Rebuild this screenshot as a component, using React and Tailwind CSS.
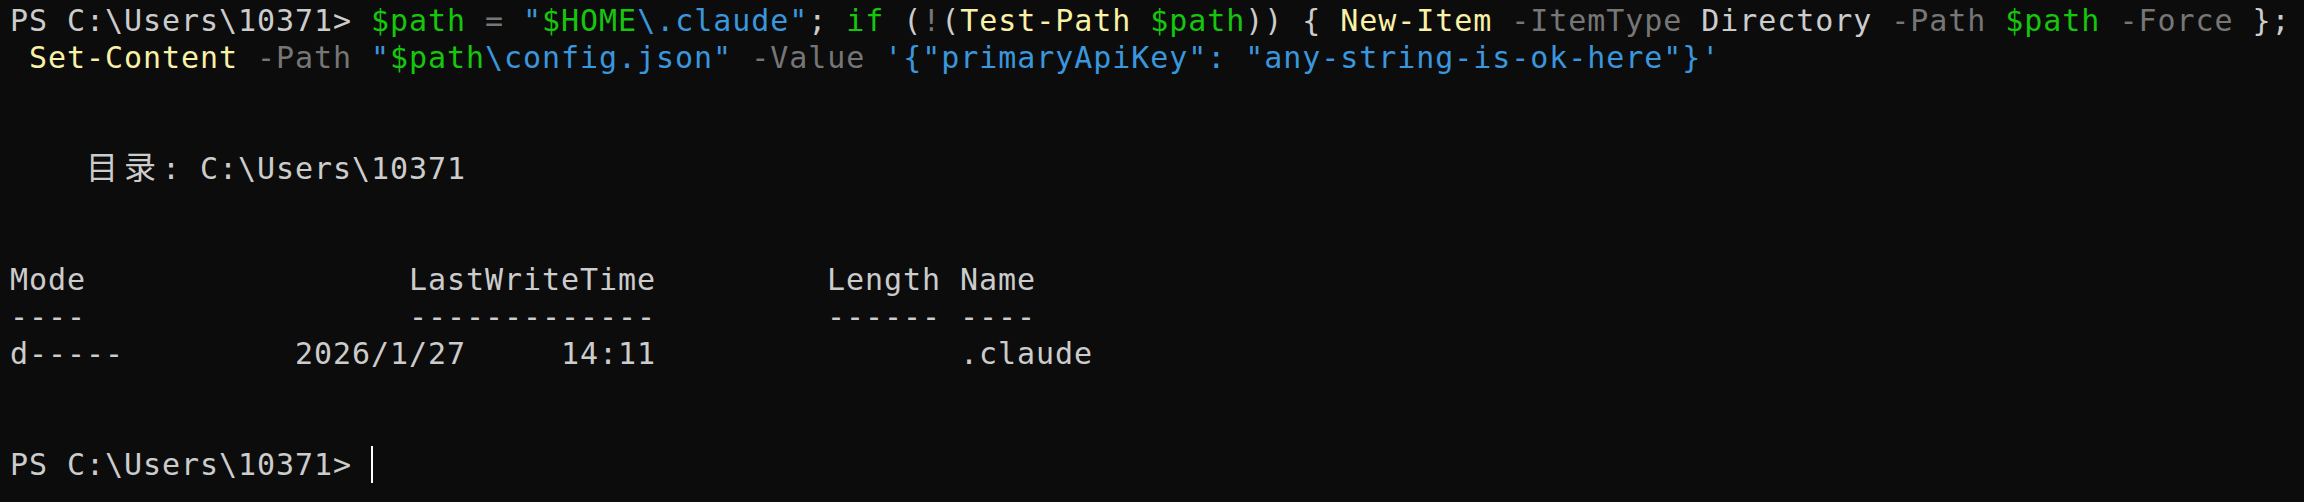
const C = {
  def: "text-[#cccccc]",
  green: "text-[#16c60c]",
  blue: "text-[#3a96dd]",
  yellow: "text-[#f9f1a5]",
  gray: "text-[#767676]",
};

function Line({ children }) {
  return <div className="h-[37px] whitespace-pre">{children}</div>;
}

function Wide({ ch }) {
  return (
    <span className="inline-block w-[38px] text-left text-[32px] leading-[37px] tracking-normal align-top">
      {ch}
    </span>
  );
}

export default function App() {
  const prompt = "PS C:\\Users\\10371> ";
  return (
    <div
      className="h-[502px] w-full overflow-hidden bg-[#0c0c0c] pl-[10px] pt-[2px] text-[30px] leading-[37px] tracking-[0.94px] text-[#cccccc]"
      style={{ fontFamily: '"DejaVu Sans Mono", "Noto Sans CJK SC", monospace' }}
    >
      <Line>
        <span className={C.def}>{prompt}</span>
        <span className={C.green}>$path</span>
        <span> </span>
        <span className={C.gray}>=</span>
        <span> </span>
        <span className={C.blue}>"</span>
        <span className={C.green}>$HOME</span>
        <span className={C.blue}>\.claude"</span>
        <span className={C.def}>; </span>
        <span className={C.green}>if</span>
        <span className={C.def}> (</span>
        <span className={C.gray}>!</span>
        <span className={C.def}>(</span>
        <span className={C.yellow}>Test-Path</span>
        <span> </span>
        <span className={C.green}>$path</span>
        <span className={C.def}>{")) { "}</span>
        <span className={C.yellow}>New-Item</span>
        <span className={C.gray}> -ItemType</span>
        <span className={C.def}> Directory</span>
        <span className={C.gray}> -Path</span>
        <span> </span>
        <span className={C.green}>$path</span>
        <span className={C.gray}> -Force</span>
        <span className={C.def}>{" };"}</span>
      </Line>
      <Line>
        <span> </span>
        <span className={C.yellow}>Set-Content</span>
        <span className={C.gray}> -Path</span>
        <span className={C.blue}> "</span>
        <span className={C.green}>$path</span>
        <span className={C.blue}>\config.json"</span>
        <span className={C.gray}> -Value</span>
        <span className={C.blue}>{` '{"primaryApiKey": "any-string-is-ok-here"}'`}</span>
      </Line>
      <Line> </Line>
      <Line> </Line>
      <Line>
        {"    "}
        <Wide ch="目" />
        <Wide ch="录" />
        {": C:\\Users\\10371"}
      </Line>
      <Line> </Line>
      <Line> </Line>
      <Line>{"Mode                 LastWriteTime         Length Name"}</Line>
      <Line>{"----                 -------------         ------ ----"}</Line>
      <Line>{"d-----         2026/1/27     14:11                .claude"}</Line>
      <Line> </Line>
      <Line> </Line>
      <Line>
        {prompt}
        <span className="inline-block h-[37px] w-[2px] bg-white align-top" />
      </Line>
    </div>
  );
}
